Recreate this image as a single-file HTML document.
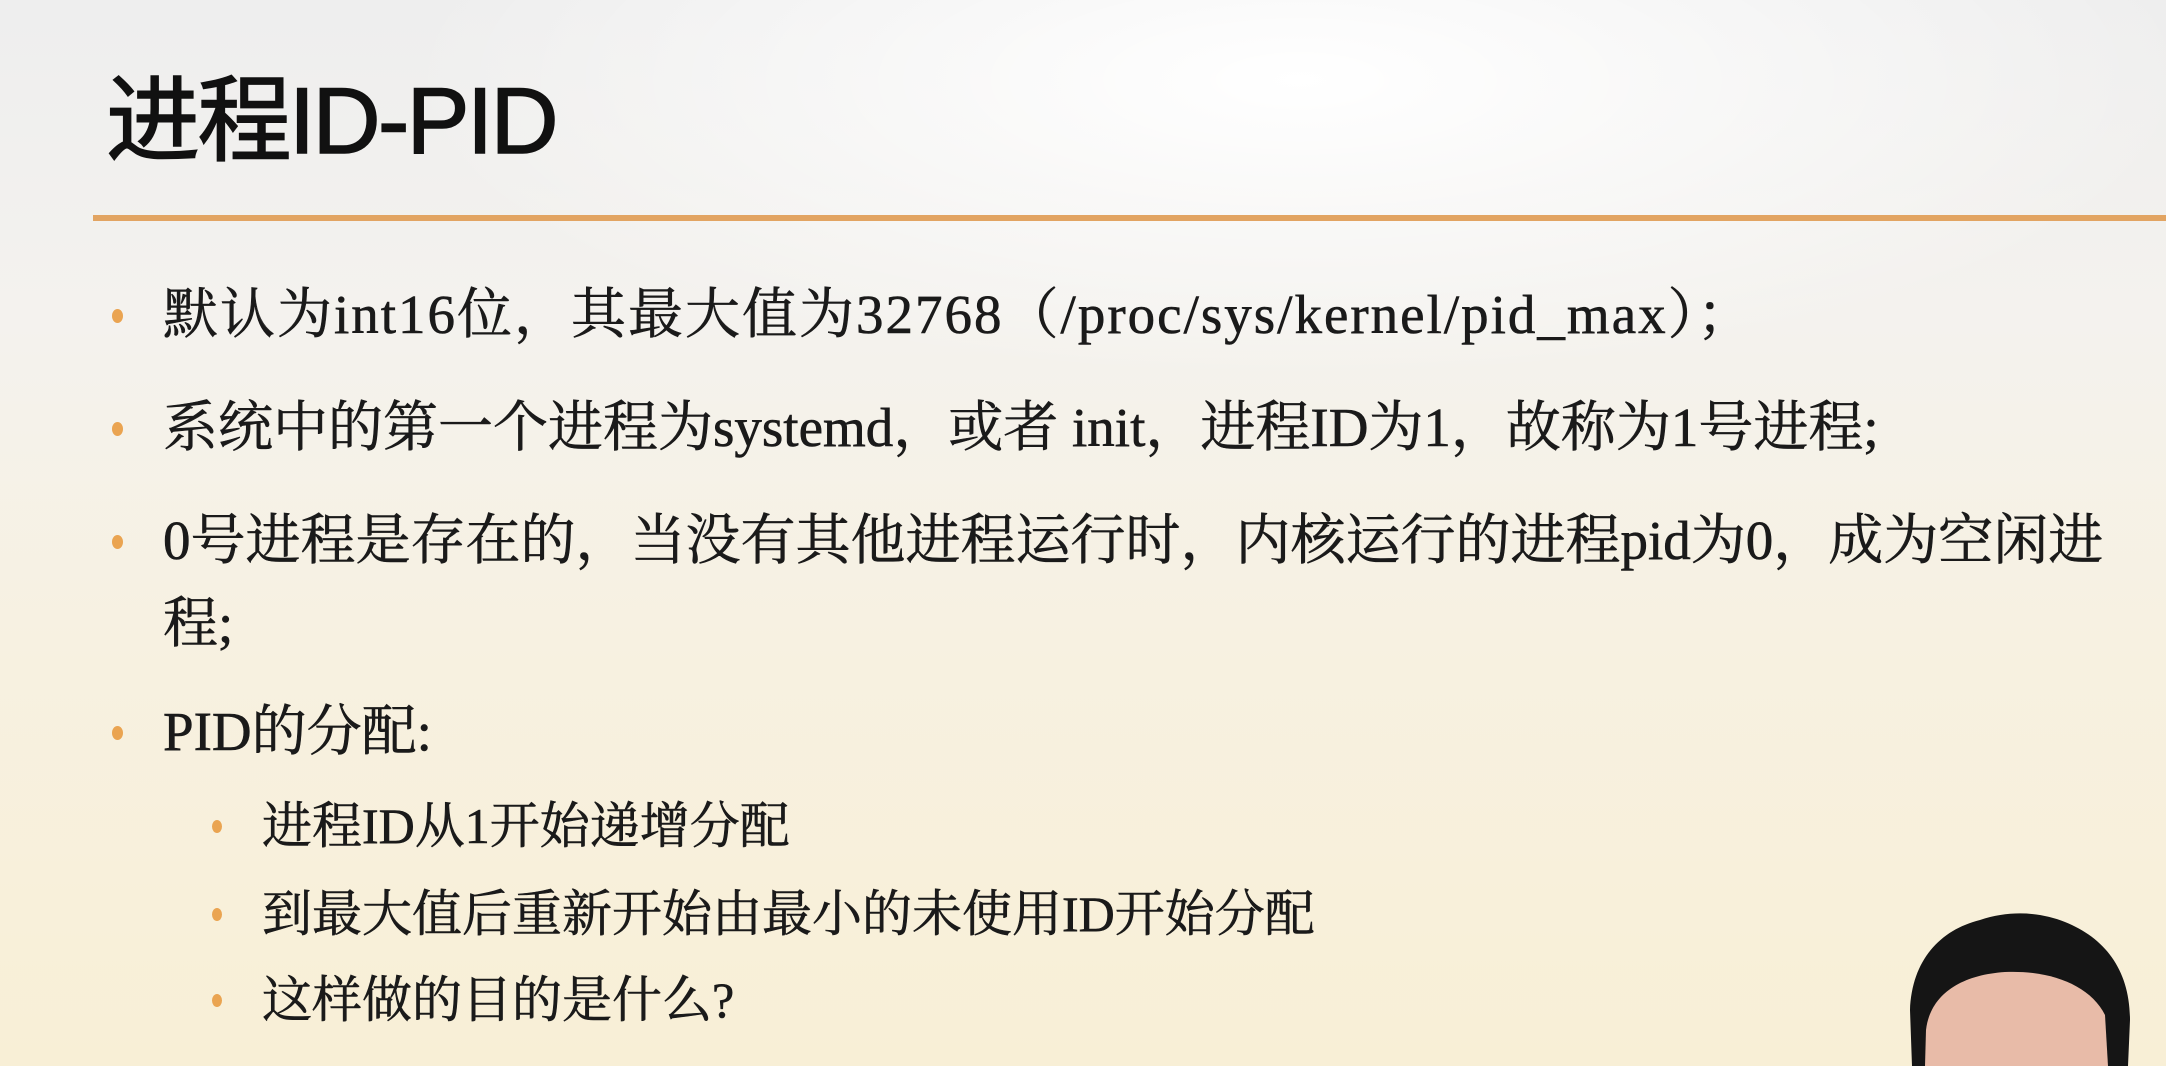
<!DOCTYPE html>
<html><head><meta charset="utf-8"><style>
html,body{margin:0;padding:0}
body{width:2166px;height:1066px;overflow:hidden;position:relative;
background:radial-gradient(ellipse 900px 300px at 1300px 80px,#ffffff 0%,rgba(255,255,255,0) 100%),linear-gradient(180deg,#eeeeee 0%,#f4f2ee 30%,#f7f1e1 60%,#f8efd6 100%);
font-family:"Liberation Serif","Noto Serif CJK SC",serif;color:#1a1a1a}
.title{position:absolute;left:106px;top:66px;font-family:"Liberation Sans","Noto Sans CJK SC",sans-serif;font-size:94px;line-height:110px;color:#111;letter-spacing:-2.5px;-webkit-text-stroke:1.5px #111}
.rule{position:absolute;left:93px;right:0;top:215px;height:6px;background:#e2a462}
.t{position:absolute;white-space:nowrap;font-size:55px;line-height:66px;-webkit-text-stroke:0.6px #1a1a1a}
.s{font-size:50px;line-height:60px}
.b{position:absolute;width:11px;height:14px;border-radius:50%;background:#eaa451}
</style></head><body>
<div class="title">进程ID-PID</div>
<div class="rule"></div>

<div class="b" style="left:112px;top:309px"></div>
<div class="t" style="left:163px;top:282px;letter-spacing:2px">默认为int16位，其最大值为32768（/proc/sys/kernel/pid_max）；</div>

<div class="b" style="left:112px;top:422px"></div>
<div class="t" style="left:163px;top:395px">系统中的第一个进程为systemd，或者 init，进程ID为1，故称为1号进程;</div>

<div class="b" style="left:112px;top:535px"></div>
<div class="t" style="left:163px;top:508px">0号进程是存在的，当没有其他进程运行时，内核运行的进程pid为0，成为空闲进</div>
<div class="t" style="left:163px;top:591px">程;</div>

<div class="b" style="left:112px;top:726px"></div>
<div class="t" style="left:163px;top:699px">PID的分配:</div>

<div class="b" style="left:212px;top:820px;width:10px;height:13px"></div>
<div class="t s" style="left:262px;top:796px">进程ID从1开始递增分配</div>
<div class="b" style="left:212px;top:908px;width:10px;height:13px"></div>
<div class="t s" style="left:262px;top:884px">到最大值后重新开始由最小的未使用ID开始分配</div>
<div class="b" style="left:212px;top:994px;width:10px;height:13px"></div>
<div class="t s" style="left:262px;top:970px">这样做的目的是什么?</div>

<svg style="position:absolute;left:1890px;top:900px" width="276" height="166" viewBox="0 0 276 166">
<path d="M22 166 L20 110 C22 60 50 30 90 20 C120 10 150 12 175 22 C215 38 240 70 240 120 L238 166 Z" fill="#151515"/>
<path d="M35 166 L36 130 C40 95 70 75 115 72 C160 70 200 85 215 115 L218 166 Z" fill="#e8bba8"/>
</svg>
</body></html>
